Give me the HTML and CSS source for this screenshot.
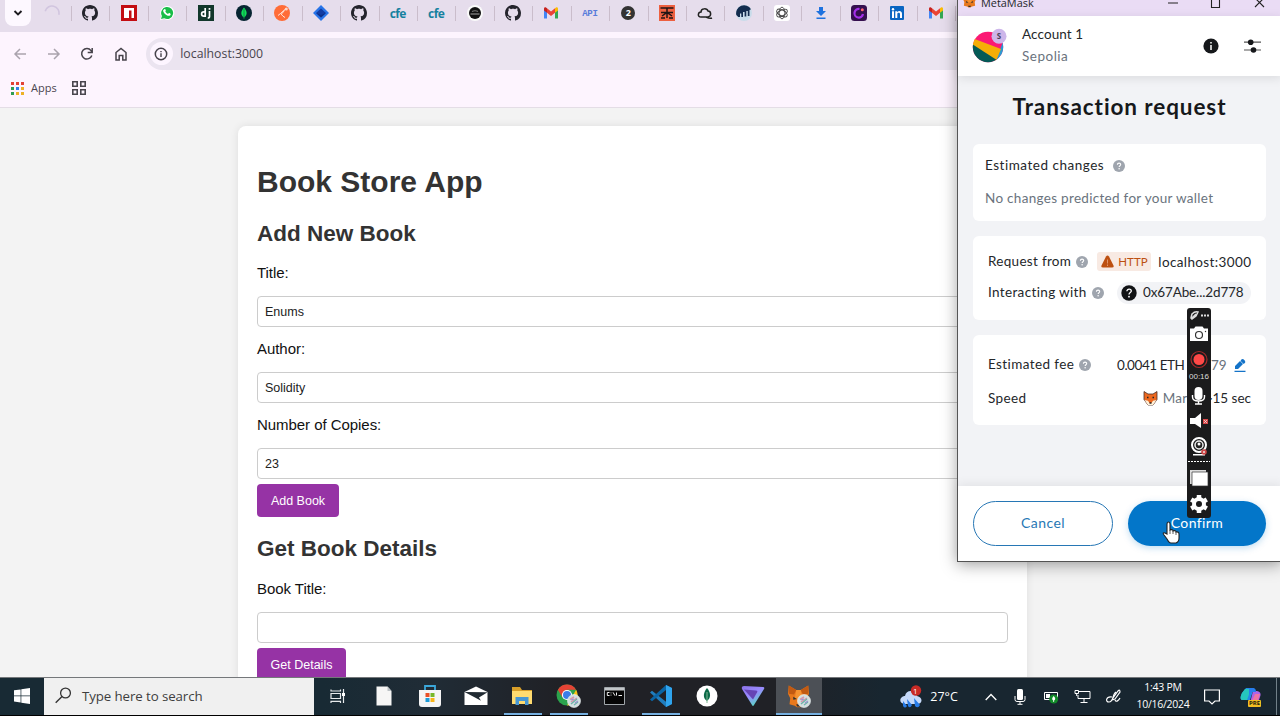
FILE: index.html
```html
<!DOCTYPE html>
<html lang="en">
<head>
<meta charset="utf-8">
<title>Book Store App</title>
<link rel="stylesheet" href="styles.css">
</head>
<body>
<svg class="defs" width="0" height="0">
  <symbol id="github" viewBox="0 0 16 16"><path fill="#24242c" d="M8 0C3.58 0 0 3.58 0 8c0 3.54 2.29 6.53 5.47 7.59.4.07.55-.17.55-.38 0-.19-.01-.82-.01-1.49-2.01.37-2.53-.49-2.69-.94-.09-.23-.48-.94-.82-1.13-.28-.15-.68-.52-.01-.53.63-.01 1.08.58 1.23.82.72 1.21 1.87.87 2.33.66.07-.52.28-.87.51-1.07-1.78-.2-3.64-.89-3.64-3.95 0-.87.31-1.59.82-2.15-.08-.2-.36-1.02.08-2.12 0 0 .67-.21 2.2.82.64-.18 1.32-.27 2-.27s1.36.09 2 .27c1.53-1.04 2.2-.82 2.2-.82.44 1.1.16 1.92.08 2.12.51.56.82 1.27.82 2.15 0 3.07-1.87 3.75-3.65 3.95.29.25.54.73.54 1.48 0 1.07-.01 1.93-.01 2.2 0 .21.15.46.55.38A8.01 8.01 0 0 0 16 8c0-4.42-3.58-8-8-8z"/></symbol>
  <symbol id="gmail" viewBox="0 0 16 16"><path fill="#4285f4" d="M1 13.5h3V7L1 4.5z"/><path fill="#34a853" d="M12 13.5h3v-9L12 7z"/><path fill="#fbbc04" d="M12 3.2 13 2.6c1-.6 2 0 2 1.2v1.6L12 7.8z"/><path fill="#c5221f" d="M1 5.4V3.8c0-1.2 1-1.8 2-1.2l1 .7v4.5z"/><path fill="#ea4335" d="M4 3.3 8 6.4l4-3.2v4.6L8 11 4 7.8z"/></symbol>
  <symbol id="fox" viewBox="0 0 32 32"><path fill="#e8781c" d="M3 2l10 6h6l10-6 1 11-3 6 1 8-7 2-3 2h-4l-3-2-7-2 1-8-3-6z"/><path fill="#c25a12" d="M3 2l10 6-3 6-7-1zM29 2 19 8l3 6 7-1z"/><path fill="#f59331" d="M13 8h6l2 12H11z"/><path fill="#32302f" d="M9 17l5 3-5 1zM23 17l-5 3 5 1zM13 27h6l-1 3h-4z"/></symbol>
  <symbol id="help" viewBox="0 0 12 12"><circle cx="6" cy="6" r="6" fill="#9fa5ae"/><path d="M4.400 4.800c0-2.300 3.300-2.200 3.300-.2 0 1.100-1.600 1.200-1.600 2.500" fill="none" stroke="#fff" stroke-width="1.100"/><circle cx="6.100" cy="8.800" r=".75" fill="#fff"/></symbol>
  <symbol id="badge" viewBox="0 0 14 14"><circle cx="7" cy="7" r="6.500" fill="#d3dfe0" stroke="#eef3f3" stroke-width=".6"/><path d="M3 5.500 7 3M4 8l6-4" stroke="#d995a8" stroke-width="1.500"/><path d="m4 10 6-5M7 11l4-3" stroke="#6cb3aa" stroke-width="1.300"/><path d="m4 6 3-1M8 9l3-2" stroke="#9995ce" stroke-width="1.200"/></symbol>
</svg>

<div class="desktop">
  <header class="browser">
    <div class="tabs">
      <button class="tab-menu"><svg width="10" height="8" viewBox="0 0 10 8"><path d="m1.500 2 3.500 3.500L8.500 2" fill="none" stroke="#1d1b20" stroke-width="1.900"/></svg></button>
      <span class="tab tab-first"><svg viewBox="0 0 16 16"><path d="M1 8a7 7 0 0 1 14 0" transform="rotate(14 8 8)" fill="none" stroke="#d1c5df" stroke-width="1.600"/></svg></span>
      <span class="tab"><svg><use href="#github"/></svg></span>
      <span class="tab"><svg viewBox="0 0 16 16"><path fill="#c30d12" d="M0 0h16v16H0z"/><path fill="#fff" d="M3 3h10v10h-2.500V5.500H8V13H3z"/></svg></span>
      <span class="tab"><svg viewBox="0 0 16 16"><path fill="#fff" d="m1 15.200 1.100-4A7 7 0 1 1 5 14.100z"/><path fill="#19bd48" d="m2 14.100.9-3.200A6 6 0 1 1 5.200 13.200z"/><path fill="#fff" d="M5.300 4.300c.8-.6 1.100-.1 1.500 1.100.1.500-.5.800-.5 1.100.6 1.200 1.500 2 2.700 2.500l.9-.9c.4-.1 1.500.6 1.800.9-.1 1.700-1.500 2.100-3 1.700-2.500-.8-4.600-3.200-4.600-4.900 0-.6.500-1.100 1.200-1.500z"/></svg></span>
      <span class="tab"><svg viewBox="0 0 16 16"><path fill="#12372b" d="M0 0h16v16H0z"/><path d="M7.200 3v8.200H5.800a2.200 2.200 0 0 1 0-4.400h1.400M11.500 6v5.500c0 1-.5 1.500-1.800 1.500M11.500 3v1.700" fill="none" stroke="#fff" stroke-width="1.700"/></svg></span>
      <span class="tab"><svg viewBox="0 0 16 16"><circle cx="8" cy="8" r="8" fill="#062431"/><path fill="#10df58" d="M8 2.500c3.500 4 3.500 7.500.3 9.800v1.500h-.6v-1.500C4.500 10 4.500 6.500 8 2.500"/><path d="M8 4v9" stroke="#087b43" stroke-width=".8"/></svg></span>
      <span class="tab"><svg viewBox="0 0 16 16"><circle cx="8" cy="8" r="8" fill="#ff6c37"/><path d="m12 3.500-5.500 5 2.500 2.700M10.500 5.500 7.500 9M6.500 8.500 4 10.500M9 11.200l2 1.300" fill="none" stroke="#ffe4d9" stroke-width="1"/><circle cx="12.300" cy="4" r="1.500" fill="#ffd6c7"/></svg></span>
      <span class="tab"><svg viewBox="0 0 16 16"><path fill="#2874e8" d="M8 0 16 8 8 16 0 8z"/><path fill="#123ca3" d="m8 3.500 5 4.500-5 4.500L3 8z"/><path fill="#0d2f86" d="m3 8 5 2 5-2-5 4.500z"/></svg></span>
      <span class="tab"><svg><use href="#github"/></svg></span>
      <span class="tab cfe">cfe</span>
      <span class="tab cfe">cfe</span>
      <span class="tab"><svg viewBox="0 0 16 16"><circle cx="8" cy="8" r="8" fill="#fafafa"/><circle cx="8" cy="8" r="6" fill="#111"/><path d="M3.500 9h9" stroke="#999" stroke-width="1.100"/><path d="M5 6.500q3-1.500 6 0" stroke="#777" fill="none" stroke-width="1.200"/></svg></span>
      <span class="tab"><svg><use href="#github"/></svg></span>
      <span class="tab"><svg><use href="#gmail"/></svg></span>
      <span class="tab api">API</span>
      <span class="tab two"><b>2</b></span>
      <span class="tab"><svg viewBox="0 0 16 16"><path fill="#ed6040" d="M0 0h16v16H0z"/><path d="M1.500 3h13M2 7.500h12M2 13h4M10 13h4M8 3v10M3 11l5-3.500 5 3.500" fill="none" stroke="#201515" stroke-width="1.500"/></svg></span>
      <span class="tab"><svg viewBox="0 0 16 16"><path d="M4 12C0 12 1 7 4 7c0-4 6-4 7-1 3 0 4 5 0 6H4M9 12q4 2 6 1" fill="none" stroke="#222" stroke-width="1.500"/></svg></span>
      <span class="tab"><svg viewBox="0 0 16 16"><circle cx="8" cy="8" r="8" fill="#c9dcea"/><path fill="#132c4e" d="M.3 10A8 8 0 0 1 15 4.200L13.500 5v6h-1.700V6h-1.500v5.500H8.600V7H7v5H5.300V8.500H4V12H2.300z"/></svg></span>
      <span class="tab"><svg viewBox="0 0 16 16"><rect width="16" height="16" rx="3" fill="#fff"/><g fill="none" stroke="#444" stroke-width=".9"><ellipse cx="8" cy="8" rx="2.900" ry="5.800"/><ellipse cx="8" cy="8" rx="2.900" ry="5.800" transform="rotate(60 8 8)"/><ellipse cx="8" cy="8" rx="2.900" ry="5.800" transform="rotate(120 8 8)"/></g></svg></span>
      <span class="tab"><svg viewBox="0 0 16 16"><path fill="#1f72df" d="M6 2h4v4h3l-5 5-5-5h3zM3.500 12.500h9V14h-9z"/></svg></span>
      <span class="tab"><svg viewBox="0 0 16 16"><rect width="16" height="16" rx="3.500" fill="#35104f"/><path d="M8.500 4A4.300 4.300 0 1 0 12 9" fill="none" stroke="#a430ea" stroke-width="2.200"/><circle cx="11.300" cy="4.800" r="1.500" fill="#ff6574"/></svg></span>
      <span class="tab"><svg viewBox="0 0 16 16"><rect x="1" y="1" width="14" height="14" rx="1" fill="#0a66c2"/><circle cx="4" cy="4.200" r="1.200" fill="#fff"/><path fill="#fff" d="M3 6.200h2V13H3zm3.300 0h1.900v1c1.500-2 4.800-1.500 4.800 1.600V13h-2V9.200c0-2-2.700-1.900-2.700 0V13h-2z"/></svg></span>
      <span class="tab"><svg><use href="#gmail"/></svg></span>
      <span class="tab"></span>
    </div>
    <div class="toolbar">
      <svg class="nav dim" viewBox="0 0 16 16"><path d="M14 8H3M8 3 3 8l5 5"/></svg>
      <svg class="nav dim" viewBox="0 0 16 16"><path d="M2 8h11M8 3l5 5-5 5"/></svg>
      <svg class="nav" viewBox="0 0 16 16"><path d="M12.800 9.500A5.200 5.200 0 1 1 12 4.600L13 6M13.200 2v4.500H8.700"/></svg>
      <svg class="nav" viewBox="0 0 16 16"><path d="M3 6.500 8 2.500l5 4V14H9.800V9.500H6.200V14H3z"/></svg>
      <div class="address"><span class="site-info"><svg width="14" height="14" viewBox="0 0 14 14"><circle cx="7" cy="7" r="5.700" fill="none" stroke="#46434b" stroke-width="1.500"/><path d="M7 6.300V10M7 3.900v1.300" stroke="#46434b" stroke-width="1.400"/></svg></span><span class="url">localhost:3000</span></div>
    </div>
    <div class="bookmarks">
      <svg width="13" height="13" viewBox="0 0 13 13"><path fill="#e34236" d="M0 0h3v3H0zM5 0h3v3H5zM10 0h3v3h-3z"/><path fill="#2f9d52" d="M0 5h3v3H0zM0 10h3v3H0z"/><path fill="#3080e9" d="M5 5h3v3H5z"/><path fill="#edb126" d="M10 5h3v3h-3zM5 10h3v3H5zM10 10h3v3h-3z"/></svg>
      <span class="apps">Apps</span>
      <svg width="14" height="14" viewBox="0 0 14 14"><path d="M.8.8h4.400v4.400H.8zM8.800.8h4.400v4.400H8.800zM.8 8.800h4.400v4.400H.8zM8.800 8.800h4.400v4.400H8.800z" fill="none" stroke="#4a464e" stroke-width="1.600"/></svg>
    </div>
  </header>

  <main class="viewport">
    <section class="book-card">
      <h1>Book Store App</h1>
      <h2>Add New Book</h2>
      <label>Title:</label><input value="Enums">
      <label>Author:</label><input value="Solidity">
      <label>Number of Copies:</label><input value="23">
      <button class="action">Add Book</button>
      <h2 class="details-heading">Get Book Details</h2>
      <label>Book Title:</label><input>
      <button class="action wide">Get Details</button>
    </section>
    <div class="scrollbar"><svg width="6" height="4" viewBox="0 0 6 4"><path fill="#444" d="M0 0h6L3 4z"/></svg></div>
  </main>

  <footer class="taskbar">
    <span class="start"><svg width="16" height="16" viewBox="0 0 16 16"><path fill="#fff" d="M0 2.300 6.600 1.400v6.100H0zM7.300 1.300 16 0v7.500H7.300zM0 8.300h6.600v6.200L0 13.600zM7.300 8.300H16V16l-8.700-1.300z"/></svg></span>
    <div class="search"><svg width="17" height="17" viewBox="0 0 17 17"><circle cx="10.500" cy="6" r="4.900" fill="none" stroke="#333" stroke-width="1.300"/><path d="m7 9.500-6.300 6.300" stroke="#333" stroke-width="1.400"/></svg><span>Type here to search</span></div>
    <nav class="apps-row">
      <span class="task"><svg width="16" height="16" viewBox="0 0 16 16"><path d="M1 1.500V3h9.500V1.500M1 5.500h9.500v5H1zM1 15v-1.700h9.500V15M13.500 1v14" fill="none" stroke="#e7eaec" stroke-width="1.200"/><path fill="#fff" d="M12 5h3v3h-3z"/></svg></span>
      <span class="task"><svg width="16" height="20" viewBox="0 0 16 20"><path fill="#f6f6f5" d="M.5.500h11L15.500 5v14.500H.5z"/><path fill="#bcc2c5" d="M11.500.500V5h4z"/></svg></span>
      <span class="task"><svg width="22" height="24" viewBox="0 0 22 24"><path d="M6 7V2h10v5" fill="none" stroke="#3aa7da" stroke-width="1.800"/><path fill="#f5f5f5" d="M0 6h22v14q0 3-3 3H3q-3 0-3-3z"/><path fill="#e95128" d="M6.500 9h4v4h-4z"/><path fill="#77b82a" d="M11.500 9h4v4h-4z"/><path fill="#1c9bd8" d="M6.500 14h4v4h-4z"/><path fill="#f8b518" d="M11.500 14h4v4h-4z"/></svg></span>
      <span class="task"><svg width="24" height="20" viewBox="0 0 24 20"><path fill="#fff" d="M.5 6 12 .5 23.500 6v13H.5z"/><path fill="#202a32" d="m.5 6 23 .2-8.500 5.300 2 3.300-6-3.300z"/></svg></span>
      <span class="task running"><svg width="22" height="20" viewBox="0 0 22 20"><path fill="#d99f29" d="M1 1h8l2 3h10v14H1z"/><path fill="#ffdb70" d="M1 5h20v13H1z"/><path fill="#4797d4" d="M4.500 11h13v8H14v-4H8v4H4.500z"/></svg></span>
      <span class="task running"><svg width="25" height="25" viewBox="0 0 25 25"><circle cx="11" cy="11" r="10.500" fill="#2ba24c"/><path fill="#e64335" d="M1.900 5.700A10.500 10.500 0 0 1 20.100 5.700H11L6.500 13.500z"/><path fill="#fbc116" d="M20.100 5.700A10.500 10.500 0 0 1 11 21.500l4.800-8z"/><circle cx="11" cy="11" r="5.100" fill="#fff"/><circle cx="11" cy="11" r="4" fill="#3c7de9"/><use href="#badge" x="11" y="10" width="14" height="14"/></svg></span>
      <span class="task"><svg width="21" height="18" viewBox="0 0 21 18"><path fill="#050505" stroke="#a0a6aa" d="M.5.500h20v17H.5z"/><path fill="#c2c6c9" d="M1 1h19v2.500H1z"/><path d="M5.500 5.500H3.300v3h2.200M7 5.500v.8M7 7.700v.8M9 5.300l2 3.400M12.500 5.500v3M14.500 8.500H18" stroke="#eee" fill="none"/></svg></span>
      <span class="task running"><svg width="24" height="24" viewBox="0 0 24 24"><path fill="#207dbd" d="m17 1 6 3v16l-6 3L1 8.500l2-1.800 14 11z"/><path fill="#0a65a5" d="M17 1v5L3 17.300 1 15.500z"/><path fill="#2fa4ee" d="m17 1 6 3v16l-6 3z"/></svg></span>
      <span class="task"><svg width="22" height="22" viewBox="0 0 22 22"><circle cx="11" cy="11" r="10.500" fill="#fff"/><path fill="#0c6a48" d="M11 3c4.200 5 4 10-.1 13C6.700 13 7 8 11 3"/><path d="M11 7v11" stroke="#80b894"/></svg></span>
      <span class="task"><svg width="24" height="22" viewBox="0 0 24 22"><defs><linearGradient id="vpn" x2=".7" y2="1"><stop stop-color="#8b72e8"/><stop offset=".5" stop-color="#9a8bff"/><stop offset="1" stop-color="#50e4bd"/></linearGradient></defs><path fill="url(#vpn)" d="M3 1 22 2q2 .2 1 2L13 20q-1 2-2 0L1 4Q0 1 3 1"/><path fill="#6645b5" d="m3 4.500 12 1q2 .2 1 2l-4 7z"/></svg></span>
      <span class="task active"><svg width="26" height="26" viewBox="0 0 26 26"><use href="#fox" x="0" y="1" width="25" height="24"/><use href="#badge" x="11" y="11" width="14" height="14"/></svg></span>
    </nav>
    <div class="tray">
      <span class="weather"><svg width="24" height="24" viewBox="0 0 24 24"><path fill="#c5d9f9" d="M5 19C-1 18 1 11 6 11c1-7 11-6 12 0 6 1 6 8 0 8z"/><path fill="#287ce8" d="m8 14 5 6q-2 4-4 1zM15 13l6 7q-2 4-5 1zM4 16l4 5q-2 3-4 0z"/><circle cx="17" cy="5.500" r="5.200" fill="#c82b26"/></svg><b>1</b></span>
      <span class="temp">27°C</span>
      <span class="w34"><svg width="12" height="8" viewBox="0 0 12 8"><path d="m.7 7 5.300-5.500L11.300 7" fill="none" stroke="#fff" stroke-width="1.300"/></svg></span>
      <span class="w24"><svg width="12" height="16" viewBox="0 0 12 16"><rect x="3" width="6" height="11" rx="1.500" fill="#fff"/><path d="M1 7v3.500q0 2 2 2h6q2 0 2-2V7M6 12.500V15M3.500 15.300h5" fill="none" stroke="#fff"/></svg></span>
      <span class="w38"><svg width="16" height="14" viewBox="0 0 16 14"><path d="M1.500 2.500h13V9.500H1.500z" fill="none" stroke="#fff"/><path fill="#fff" d="M3 4h4v4H3z"/><circle cx="10.700" cy="9" r="4.500" fill="#128b29"/><path fill="#fff" d="M10.700 6c2 2 2 4 .4 4.500V12h-.8v-1.500C8.700 10 8.700 8 10.700 6"/></svg></span>
      <span class="w24"><svg width="17" height="15" viewBox="0 0 17 15"><path d="M5 2.500h11v7H4V6M10 9.500V13M6.500 13.500h7M1 1.500h3.500v3H1zM2.700 4.500V7" fill="none" stroke="#fff"/></svg></span>
      <span class="w40"><svg width="17" height="17" viewBox="0 0 17 17"><path d="m7 10 5-7q2-2 2 1L9 11l-3 1zM6 9c-6-1-7 5-3 5 5 0 3-8 7-10M9 12c1 3 4 0 5-2" fill="none" stroke="#fff" stroke-width="1.200"/></svg></span>
      <span class="clock">1:43 PM<br>10/16/2024</span>
      <span class="w40"><svg width="16" height="16" viewBox="0 0 16 16"><path d="M.6 1h14.800v11H11l-3 3-3-3H.6z" fill="none" stroke="#fff" stroke-width="1.200"/></svg></span>
      <span class="copilot"><svg width="21" height="20" viewBox="0 0 21 20"><path fill="#2389e8" d="M6 1h8l-4 12H3C-1 13 1 8 2 6z"/><path fill="#26c7bd" d="M5 2h6L7 13H3C-1 13 1 8 2 6z"/><path fill="#ae63e8" d="M13 4h4q5 1 3 6l-2 6h-8z"/><path fill="#ef73a4" d="M15 7h5l-3 9h-6z"/><path fill="#267dee" d="M9 1h4q3 0 3 4h-4q-2 0-3 3z"/></svg><b>PRE</b></span>
      <span class="divider"></span>
    </div>
  </footer>

  <aside class="wallet">
    <div class="wallet-title"><svg width="15" height="15"><use href="#fox"/></svg><span>MetaMask</span><svg class="window-controls" width="99" height="12" viewBox="0 0 99 12"><path d="M2 7h10M45.500 1.500h8v10h-8zM89 2l9 9M98 2l-9 9" fill="none" stroke="#222" stroke-width="1.100"/></svg></div>
    <div class="account">
      <svg width="36" height="36" viewBox="0 0 36 36"><defs><clipPath id="avatar"><circle cx="16" cy="19" r="15.200"/></clipPath></defs><g clip-path="url(#avatar)"><path fill="#fb1974" d="M0 0h32v36H0z"/><path fill="#2b9bd2" d="m32 11-9 24h10z"/><path fill="#f6ae07" d="M0 10 29 21l-5 12L0 18z"/><path fill="#045a56" d="m0 16 24 15.500-2 5H0z"/></g><circle cx="27" cy="8.300" r="7.500" fill="#cdb6ea"/><text x="27" y="11.300" text-anchor="middle" class="network-letter">S</text></svg>
      <div class="account-text"><span>Account 1</span><span class="muted">Sepolia</span></div>
      <div class="account-icons"><svg width="16" height="16" viewBox="0 0 16 16"><circle cx="8" cy="8" r="7.600" fill="#16181b"/><path d="M8 7v5M8 4v1.600" stroke="#fff" stroke-width="1.500"/></svg><svg width="17" height="16" viewBox="0 0 17 16"><path d="M0 4.200h17M0 12h17" stroke="#555" stroke-width="1.200"/><circle cx="6.700" cy="4.200" r="2.800" fill="#16181b"/><circle cx="9.500" cy="12" r="2.800" fill="#16181b"/></svg></div>
    </div>
    <div class="wallet-body">
      <h3>Transaction request</h3>
      <section class="panel changes"><div class="caption"><span class="t-changes">Estimated changes</span><svg class="help"><use href="#help"/></svg></div><p>No changes predicted for your wallet</p></section>
      <section class="panel request">
        <div class="row"><div class="caption"><span class="t-request">Request from</span><svg class="help"><use href="#help"/></svg></div><div class="origin"><span class="http"><svg width="13" height="13" viewBox="0 0 13 13"><path fill="#bd5011" d="M5 1.500q1.500-2 3 0l4.500 9q.8 2-1.500 2H2q-2.300 0-1.500-2z"/><path d="M6.500 4.500v4M6.500 9.500V11" stroke="#e0946c" stroke-width="1"/></svg>HTTP</span><span class="host">localhost:3000</span></div></div>
        <div class="row"><div class="caption"><span class="t-interacting">Interacting with</span><svg class="help"><use href="#help"/></svg></div><div class="contract"><svg width="16" height="16" viewBox="0 0 16 16"><circle cx="8" cy="8" r="7.700" fill="#111315"/><path d="M5.900 6.300c0-3 4.400-2.700 4.400-.2C10.300 7.600 8 7.500 8 9.500" fill="none" stroke="#fff" stroke-width="1.300"/><circle cx="8" cy="11.700" r=".9" fill="#fff"/></svg><span>0x67Abe...2d778</span></div></div>
      </section>
      <section class="panel fees">
        <div class="row"><div class="caption"><span class="t-fee">Estimated fee</span><svg class="help"><use href="#help"/></svg></div><div class="fee"><span class="eth">0.0041 ETH</span><span class="usd">79</span><svg width="12" height="13" viewBox="0 0 12 13"><path fill="#1473c8" d="m1 7 5-5 3 3-5 5H1zM7 1q1.500-2 3.500.3Q12 3 10.500 4.300L9.700 5 6.600 2zM.5 11.700h11V13H.5z"/></svg></div></div>
        <div class="row"><span class="t-speed">Speed</span><div class="speed"><svg width="15" height="15" viewBox="0 0 15 15"><path fill="#ed681f" stroke="#4b3028" stroke-width=".8" d="M1 .5 5 3h5l4-2.500v8L10 14H5L1 8.500z"/><path fill="#fff1d9" d="m1.500 9 3.500.8L6.500 12h2L10 9.800l3.500-.8-3.500 5H5z"/><path d="M4 6.500h1.500M9.500 6.500H11M6.500 12h2" stroke="#222" stroke-width="1.500"/></svg><span class="market">Mar</span><span class="seconds">~15 sec</span></div></div>
      </section>
    </div>
    <div class="wallet-actions"><button class="cancel">Cancel</button><button class="confirm">Confirm</button></div>
  </aside>

  <div class="recorder">
    <svg width="24" height="65" viewBox="0 0 24 65"><path d="m4 10 1-4q3-3 6-2L9 8l-4 3zM5 10l4-4" fill="none" stroke="#ddd" stroke-width="1.500"/><path d="M14 7.500h8" stroke="#ddd" stroke-width="2" stroke-dasharray="2 1"/><path fill="#fff" d="M3 20.500h4l1.500-2h7l1.500 2h4V33H3z"/><circle cx="12" cy="27" r="3.500" fill="#fff" stroke="#333" stroke-width="1.200"/><circle cx="18.500" cy="23.500" r=".7" fill="#333"/><circle cx="12" cy="51.500" r="8" fill="none" stroke="#a5292a" stroke-width="1.200"/><circle cx="12" cy="51.500" r="5.500" fill="#ff4947"/></svg>
    <span class="elapsed">00:16</span>
    <svg width="24" height="135" viewBox="0 0 24 135"><rect x="7.500" y="4" width="8" height="13" rx="4" fill="#fff"/><path d="M5.500 12v2q0 4 6 4t6-4v-2M11.500 18v3M8 21h7" fill="none" stroke="#fff" stroke-width="1.400"/><path fill="#fff" d="M3 35h5l6-5v15l-6-4H3z"/><path fill="#d84647" d="M16 36h5v5h-5z"/><path d="m17 37 3 3M20 37l-3 3" stroke="#eee" stroke-width=".7"/><circle cx="12" cy="62" r="7" fill="none" stroke="#fff" stroke-width="2"/><circle cx="12" cy="62" r="4" fill="#222" stroke="#eee" stroke-width="1.500"/><circle cx="12" cy="61" r="1.500" fill="#fff"/><path fill="#fff" d="M6 71h12v1.500H6z"/><circle cx="17" cy="69" r="2.800" fill="#ce4545"/><path d="m16 68 2 2M18 68l-2 2" stroke="#eee" stroke-width=".7"/><path d="M1 78.500h22" stroke="#fff" stroke-dasharray="2 1"/><path fill="#ddd" d="M3 87h16v14H3z"/><path fill="#fff" stroke="#333" stroke-width=".7" d="M5 89h16v14H5z"/><g transform="translate(12 121)"><circle r="5" fill="none" stroke="#fff" stroke-width="4"/><path d="M0-9v4M0 5v4M-7.800-4.500l3.500 2M4.300 2.500l3.500 2M-7.800 4.500l3.500-2M4.300-2.500l3.500-2" stroke="#fff" stroke-width="4.500"/></g></svg>
  </div>
  <svg class="cursor" width="19" height="23" viewBox="0 0 19 23"><path d="M5 13V3q0-2 1.500-2T8 3v6q3-1 3 1 3-1 3 1 3-.5 3 2v4q0 4-3 5H9q-2 0-4-4l-3-4q-2-3 1-2z" fill="#fff" stroke="#222" stroke-width="1.100"/><path d="M8 9v4M11 10v3M14 11v3" stroke="#333" stroke-width=".8"/></svg>
</div>
</body>
</html>
```
FILE: styles.css
```css
* { box-sizing: border-box; }
body { margin: 0; overflow: hidden; font-family: "Liberation Sans", Arial, sans-serif; }
button, input { font-family: inherit; margin: 0; }
svg { display: block; flex: none; }
.defs { position: absolute; }
.desktop { position: relative; width: 1280px; height: 716px; overflow: hidden; display: grid; grid-template-rows: 108px 569px 39px; background: #f3f3f3; }

.browser { background: #fdf4fe; border-bottom: 1px solid #e4dde6; font-family: "Open Sans", sans-serif; }
.tabs { display: flex; height: 32px; background: #e6ddec; padding-left: 5px; overflow: hidden; }
.tab-menu { width: 26px; height: 26px; border: 0; border-radius: 0 0 8px 8px; background: #fdf8ff; padding: 0; display: grid; place-items: center; flex: none; }
.tab { position: relative; flex: none; width: 38.450px; height: 26px; display: grid; place-items: center; }
.tab:not(.tab-first)::before { content: ""; position: absolute; left: 0; top: 6px; height: 15px; width: 1px; background: #cabdcb; }
.tab-first { margin-left: 1.500px; width: 38.500px; }
.tab > svg { width: 16px; height: 16px; }
.cfe { color: #16819f; font: bold 12px "Open Sans", sans-serif; letter-spacing: -.6px; }
.api { color: #587bda; font: bold 9px "Liberation Mono", monospace; letter-spacing: -.3px; padding-top: 2px; }
.two b { width: 14px; height: 14px; border-radius: 50%; background: #333; color: #fff; font-size: 9px; line-height: 14px; text-align: center; }
.toolbar { height: 42px; padding: 1px 0 0 12px; display: flex; align-items: center; gap: 17.700px; }
.nav { width: 16px; height: 16px; fill: none; stroke: #47434b; stroke-width: 1.500; }
.dim { stroke: #aaa3ad; }
.address { display: flex; align-items: center; gap: 7.500px; width: 1150px; height: 32px; margin-left: -1px; padding-left: 4px; border-radius: 16px; background: #ebe4f0; flex: none; }
.site-info { width: 23px; height: 23px; display: grid; place-items: center; background: #fdf5ff; border-radius: 50%; }
.url { color: #49454e; font-size: 12.300px; line-height: 16px; }
.bookmarks { display: flex; align-items: center; height: 28px; padding-left: 11px; gap: 7px; }
.apps { width: 34px; font-size: 11px; line-height: 16px; color: #49454e; }

.viewport { display: flex; justify-content: space-between; padding-left: 238px; overflow: hidden; }
.book-card { width: 789px; height: 620px; margin-top: 18px; padding: 39px 19px 0; border-radius: 8px; background: #fff; box-shadow: 0 0 9px rgba(0,0,0,.09); color: #111; flex: none; }
h1, h2, h3 { margin: 0; }
h1 { font-size: 30px; line-height: 34px; color: #333; }
h2 { margin: 22px 0 14px; font-size: 22.500px; line-height: 26px; color: #333; }
label { display: block; font-size: 15px; line-height: 24px; margin-bottom: 11px; letter-spacing: -.05px; }
input { display: block; width: 751px; height: 31px; margin-bottom: 10px; padding: 0 7px; border: 1px solid #ccc; border-radius: 4px; font-size: 12.500px; color: #222; background: #fff; }
.action { display: block; width: 82px; height: 33px; margin-top: -5px; border: 0; border-radius: 4px; background: #9633a5; color: #fff; padding: 0; font-size: 12.500px; }
.details-heading { margin: 19px 0 15px; }
.wide { width: 89px; }
.scrollbar { width: 15px; display: flex; align-items: flex-end; justify-content: center; padding-bottom: 6px; background: #fafafa; }

.taskbar { display: flex; border-top: 1px solid #74777a; border-bottom: 1px solid #000; color: #fff; background: linear-gradient(90deg, #182a34 0 25%, #202c36 33%, #202126 43% 60%, #182630 68%); font-family: "Open Sans", sans-serif; }
.start { width: 44px; display: grid; place-items: center; padding-bottom: 1px; }
.search { width: 270px; display: flex; align-items: center; gap: 10px; padding: 0 0 2px 11px; color: #3e3e3e; background: #f0f0f0; font-size: 13.300px; letter-spacing: -.1px; }
.apps-row { display: flex; width: 582px; }
.task { width: 46.200px; flex: none; display: grid; place-items: center; padding: 0 0 1px 1px; position: relative; }
.running::after, .active::after { content: ""; position: absolute; bottom: 0; left: 5px; width: 38px; height: 2px; background: #75afe0; }
.active { background: #4c5056; }
.active::after { left: 0; width: 46px; }
.tray { display: flex; align-items: center; }
.tray > span { flex: none; display: grid; place-items: center; }
.weather { position: relative; width: 30px; }
.weather b { position: absolute; left: 17px; top: 0; font-size: 8px; line-height: 12px; font-weight: 400; }
.temp { width: 48px; font-size: 12.500px; padding: 0 12px 1px 0; }
.w34 { width: 34px; } .w24 { width: 24px; } .w38 { width: 38px; } .w40 { width: 40px; }
.tray .clock { display: block; width: 58px; font-size: 10.500px; line-height: 17px; text-align: center; letter-spacing: -.25px; white-space: nowrap; padding-bottom: 2px; }
.copilot { width: 36px; position: relative; }
.copilot b { position: absolute; right: 7px; bottom: 0; background: #f3bf23; color: #221b0a; border-radius: 1px; padding: 0 1px; font-size: 6px; line-height: 7px; }
.divider { height: 37px; width: 1px; margin-left: 8px; background: #718088; }

.wallet { position: absolute; left: 957px; top: 0; width: 325px; height: 562px; display: grid; grid-template-rows: 16px 60px 410px 75px; background: #f2f3f6; border-left: 1px solid #555; border-bottom: 1px solid #555; box-shadow: 0 3px 15px rgba(0,0,0,.35); color: #24272a; font-family: Lato, sans-serif; }
.wallet-title { display: flex; align-items: flex-end; padding-left: 4px; gap: 4px; overflow: hidden; background: #eadcf5; font: 10.900px/15px "Open Sans", sans-serif; }
.wallet-title > svg:first-child { margin-bottom: 8px; }
.wallet-title span { margin-bottom: 6px; }
.wallet-title .window-controls { margin: 0 17px 8px auto; }
.account { display: flex; background: #fff; padding: 12px 21px 0 14px; position: relative; box-shadow: 0 2px 10px rgba(0,0,0,.1); }
.network-letter { font: bold 8px "Open Sans", sans-serif; fill: #4b4158; }
.account-text { margin: -4px 0 0 14px; display: flex; flex-direction: column; font-size: 13.500px; line-height: 21.500px; letter-spacing: .1px; white-space: nowrap; }
.muted { color: #6a737d; letter-spacing: .5px; }
.account-icons { display: flex; gap: 25px; margin: 10px 0 0 auto; }
.wallet-body { padding: 15px 0 0 15px; }
h3 { width: 293px; height: 32px; line-height: 32px; text-align: center; color: #16181b; font-size: 22.500px; letter-spacing: .9px; }
.panel { width: 293px; border-radius: 6px; background: #fff; font-size: 13.500px; }
.caption, .origin, .contract, .fee, .speed, .row { display: flex; align-items: center; }
.row { justify-content: space-between; height: 31px; }
.caption { gap: 5px; white-space: nowrap; }
.caption span, .t-speed { margin-top: -2px; }
.t-changes { letter-spacing: .52px; }
.t-request { letter-spacing: .3px; }
.t-interacting { letter-spacing: .35px; }
.t-fee { letter-spacing: .4px; }
.t-speed { letter-spacing: .4px; }
.help { width: 12px; height: 12px; }
.changes { height: 77px; margin-top: 20.500px; padding: 11px 12px 0; }
.changes .caption { gap: 9px; height: 22px; }
.changes p { margin: 10px 0 0; line-height: 22px; color: #6a737d; letter-spacing: .3px; white-space: nowrap; }
.request { height: 84px; margin-top: 15.500px; padding: 10px 15px 0; }
.http { display: flex; align-items: center; gap: 4px; width: 54px; height: 19px; padding-left: 4px; margin-right: 7px; border-radius: 3px; color: #bd5011; background: #f8eae3; font-size: 11.500px; }
.host { letter-spacing: .38px; margin-right: -.4px; }
.contract { height: 22px; width: 134px; gap: 6px; padding-left: 4px; border-radius: 12px; background: #f2f3f6; }
.contract span { letter-spacing: -.13px; margin-top: -1px; }
.fees { height: 90px; margin-top: 15px; padding: 13px 15px 0; }
.fees .row { height: 34px; }
.fee, .speed { white-space: nowrap; }
.eth { width: 94px; letter-spacing: -.45px; }
.usd { width: 16px; margin-right: 7px; color: #6a737d; }
.fee span, .speed span { margin-top: -1px; }
.fee svg { margin-right: 5px; }
.market { width: 42px; margin-left: 5px; color: #6a737d; letter-spacing: .3px; }
.speed { padding-bottom: 1px; }
.wallet-actions { position: relative; display: flex; gap: 15px; padding: 15px; background: #fff; box-shadow: 0 -2px 10px rgba(0,0,0,.07); }
.wallet-actions button { height: 45px; padding: 0 0 2px; border: 1px solid #2777b5; border-radius: 23px; font: 14px Lato, sans-serif; letter-spacing: .4px; }
.wallet-actions .cancel { width: 140px; background: #fff; color: #2777b5; }
.wallet-actions .confirm { width: 138px; border: 0; background: #0376c9; color: #fff; box-shadow: 0 2px 7px rgba(3,118,201,.25); }

.recorder { position: absolute; left: 1187px; top: 308px; width: 24px; height: 210px; border-radius: 3px; overflow: hidden; background: #1b1b1c; }
.recorder > svg:first-child { height: 65px; }
.elapsed { display: block; height: 10px; line-height: 7px; color: #ddd; font-size: 8px; text-align: center; }
.cursor { position: absolute; left: 1162px; top: 521px; }
```
